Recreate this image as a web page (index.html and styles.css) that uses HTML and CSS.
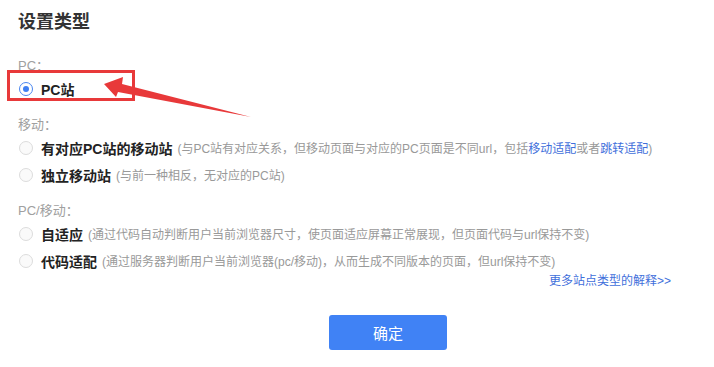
FILE: index.html
```html
<!DOCTYPE html>
<html lang="zh-CN">
<head>
  <meta charset="UTF-8" />
  <title>设置类型</title>
  <link rel="stylesheet" href="styles.css">
</head>
<body>
  <div class="panel">
    <h2 class="title">设置类型</h2>

    <!-- PC -->
    <div class="group first">
      <div class="group-label">PC：</div>
      <label class="row">
        <span class="radio checked"></span>
        <span class="name">PC站</span>
      </label>
    </div>

    <!-- 移动 -->
    <div class="group">
      <div class="group-label">移动：</div>
      <label class="row">
        <span class="radio"></span>
        <span class="name">有对应PC站的移动站</span>
        <span class="desc">(与PC站有对应关系，但移动页面与对应的PC页面是不同url，包括<a class="link">移动适配</a>或者<a class="link">跳转适配</a>)</span>
      </label>
      <label class="row">
        <span class="radio"></span>
        <span class="name">独立移动站</span>
        <span class="desc">(与前一种相反，无对应的PC站)</span>
      </label>
    </div>

    <!-- PC/移动 -->
    <div class="group">
      <div class="group-label">PC/移动：</div>
      <label class="row">
        <span class="radio"></span>
        <span class="name">自适应</span>
        <span class="desc">(通过代码自动判断用户当前浏览器尺寸，使页面适应屏幕正常展现，但页面代码与url保持不变)</span>
      </label>
      <label class="row">
        <span class="radio"></span>
        <span class="name">代码适配</span>
        <span class="desc">(通过服务器判断用户当前浏览器(pc/移动)，从而生成不同版本的页面，但url保持不变)</span>
      </label>
    </div>

    <div class="more"><a class="link">更多站点类型的解释&gt;&gt;</a></div>

    <div class="footer">
      <button class="btn">确定</button>
    </div>
  </div>

  <!-- annotation: red box + arrow -->
  <div class="mark-box"></div>
  <svg class="mark-arrow" width="714" height="367" viewBox="0 0 714 367">
    <polygon points="104,84 123,77 122,84 251,117 118,92 116,97" fill="#e8393a"/>
  </svg>
</body>
</html>
```

FILE: styles.css
```css
body {
  margin: 0;
  background: #fff;
  font-family: "Liberation Sans", "Noto Sans CJK SC", sans-serif;
  color: #333;
  position: relative;
  width: 714px;
  height: 367px;
  overflow: hidden;
}

.panel {
  padding: 10px 43px 0 18px;
}

.title {
  margin: 0;
  font-size: 18px;
  line-height: 24px;
  font-weight: bold;
  color: #333;
}

.group {
  margin-top: 14px;
}

.group.first {
  margin-top: 23px;
}

.group-label {
  font-size: 13px;
  line-height: 18px;
  color: #a0a0a0;
}

.row {
  display: flex;
  align-items: center;
  height: 27px;
  white-space: nowrap;
}

.radio {
  box-sizing: border-box;
  width: 14px;
  height: 14px;
  margin-left: 1px;
  margin-right: 8px;
  border: 1px solid #dcdcdc;
  border-radius: 50%;
  background: #fafafa;
  position: relative;
  flex-shrink: 0;
}

.radio.checked {
  border-color: #4a86f0;
  background: #fff;
}

.radio.checked::after {
  content: "";
  position: absolute;
  left: 3px;
  top: 3px;
  width: 6px;
  height: 6px;
  border-radius: 50%;
  background: #3f7ff2;
}

.name {
  font-size: 14px;
  font-weight: bold;
  color: #222;
}

.desc {
  margin-left: 5px;
  font-size: 12px;
  color: #999;
}

.link {
  color: #3f6fdb;
  text-decoration: none;
  cursor: pointer;
}

.more {
  text-align: right;
  font-size: 12px;
  line-height: 14px;
}

.footer {
  margin-top: 27px;
  padding-left: 311px;
}

.btn {
  width: 118px;
  height: 35px;
  border: none;
  border-radius: 3px;
  background: #4082f5;
  color: #fff;
  font-family: "Liberation Sans", "Noto Sans CJK SC", sans-serif;
  font-size: 15px;
  cursor: pointer;
}

.btn:hover {
  background: #2f6fe0;
}

.mark-box {
  position: absolute;
  left: 7px;
  top: 70px;
  width: 122px;
  height: 25px;
  border: 3px solid #e8393a;
}

.mark-arrow {
  position: absolute;
  left: 0;
  top: 0;
  pointer-events: none;
}
```
